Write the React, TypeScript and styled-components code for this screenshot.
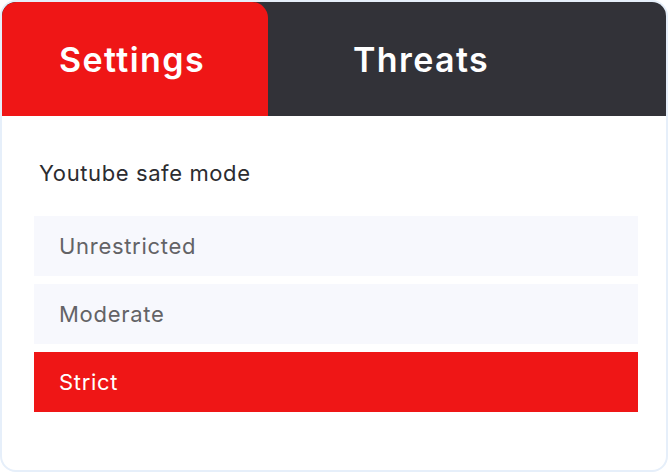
import React, { useState } from "react";
import styled, { createGlobalStyle } from "styled-components";

const GlobalStyle = createGlobalStyle`
  html, body { margin: 0; padding: 0; background: #ffffff; }
  body { font-family: "Inter", "Noto Sans", sans-serif; }
  * { box-sizing: border-box; }
`;

const Card = styled.div`
  width: 668px;
  height: 472px;
  border: 2px solid #e6effa;
  border-radius: 16px;
  overflow: hidden;
  background: #ffffff;
  display: flex;
  flex-direction: column;
`;

const TabBar = styled.div`
  display: flex;
  height: 114px;
  background: #323238;
  flex-shrink: 0;
`;

const Tab = styled.button<{ $active: boolean; $pad: number; $width?: number }>`
  border: none;
  margin: 0;
  cursor: pointer;
  display: flex;
  align-items: center;
  padding: 0 0 0 ${(p) => p.$pad}px;
  ${(p) => (p.$width ? `width: ${p.$width}px;` : "flex: 1;")}
  background: ${(p) => (p.$active ? "#ef1616" : "transparent")};
  border-radius: ${(p) => (p.$active ? "14px 16px 0 0" : "0")};
  color: #ffffff;
  font-family: "Inter", "Noto Sans", sans-serif;
  font-size: 34px;
  font-weight: 600;
  letter-spacing: 1.4px;
  padding-bottom: 0;
`;

const Body = styled.div`
  display: flex;
  flex-direction: column;
  padding: 44px 28px 0 32px;
`;

const Label = styled.div`
  font-size: 22px;
  color: #2c2c30;
  padding-left: 5px;
  margin-bottom: 30px;
  line-height: 26px;
  letter-spacing: 0.6px;
`;

const Options = styled.div`
  display: flex;
  flex-direction: column;
  gap: 8px;
`;

const Option = styled.div<{ $active: boolean }>`
  height: 60px;
  display: flex;
  align-items: center;
  padding-left: 25px;
  font-size: 22px;
  letter-spacing: 0.7px;
  background: ${(p) => (p.$active ? "#ef1616" : "#f7f8fd")};
  color: ${(p) => (p.$active ? "#ffffff" : "#636366")};
  cursor: pointer;
`;

const modes = ["Unrestricted", "Moderate", "Strict"];

export default function App() {
  const [tab, setTab] = useState("Settings");
  const [mode, setMode] = useState("Strict");
  return (
    <>
      <GlobalStyle />
      <Card>
        <TabBar>
          <Tab $active={tab === "Settings"} $pad={57} $width={266} onClick={() => setTab("Settings")}>
            Settings
          </Tab>
          <Tab $active={tab === "Threats"} $pad={85} onClick={() => setTab("Threats")}>
            Threats
          </Tab>
        </TabBar>
        <Body>
          <Label>Youtube safe mode</Label>
          <Options>
            {modes.map((m) => (
              <Option key={m} $active={mode === m} onClick={() => setMode(m)}>
                {m}
              </Option>
            ))}
          </Options>
        </Body>
      </Card>
    </>
  );
}
